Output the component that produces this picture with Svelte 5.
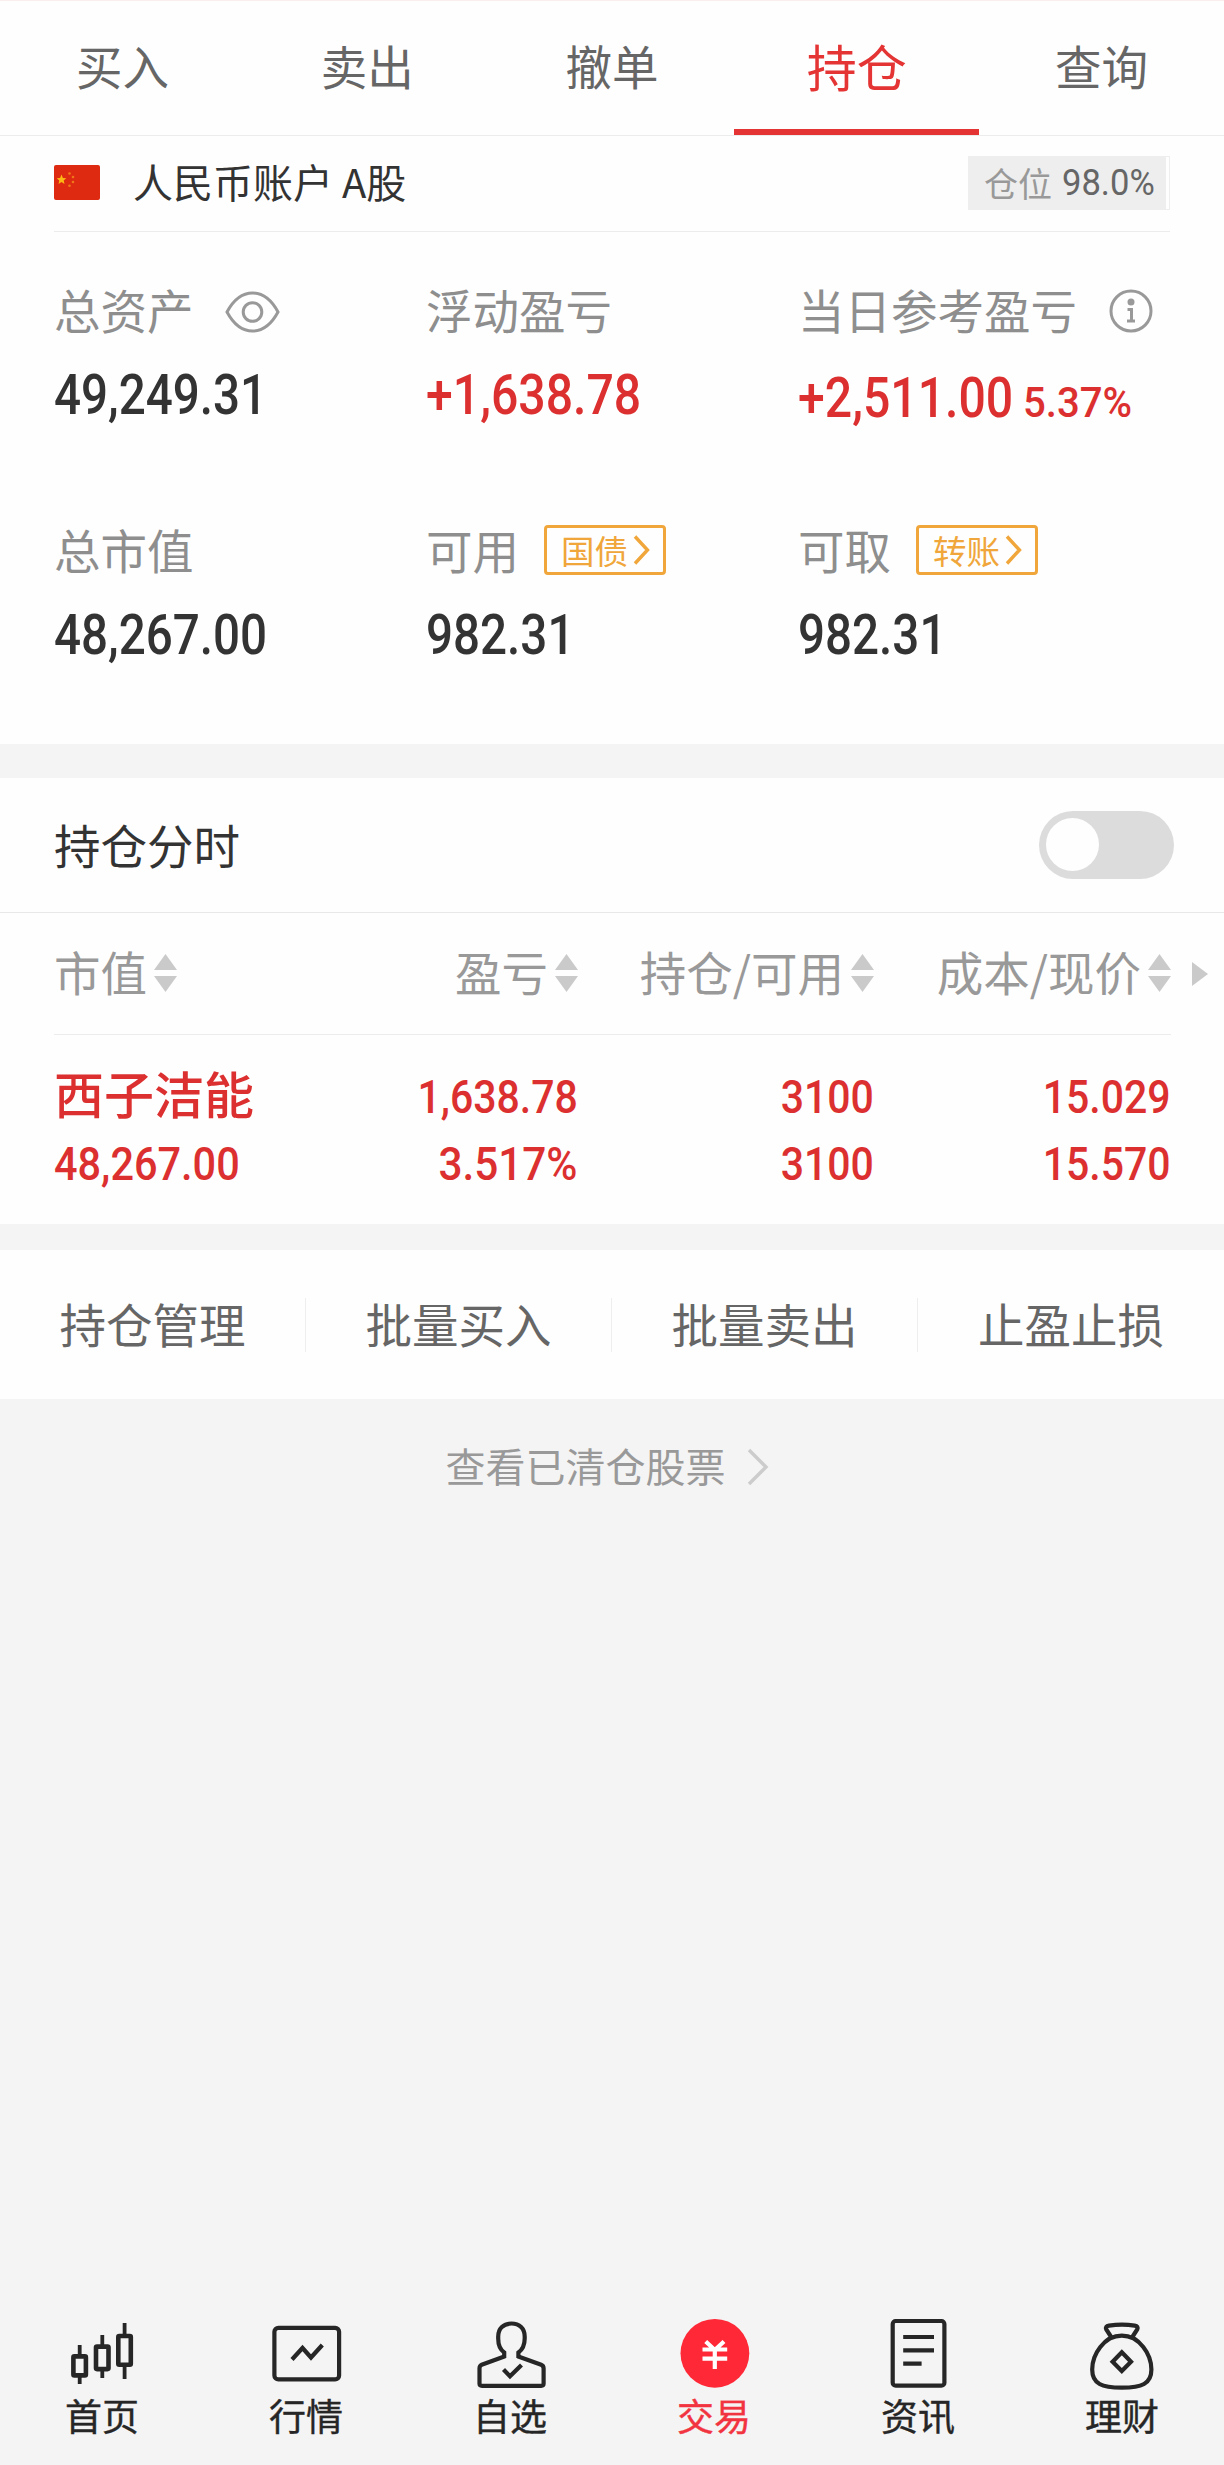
<script>
  const tabs = ['买入', '卖出', '撤单', '持仓', '查询'];
  const activeTab = '持仓';
  const columns = ['市值', '盈亏', '持仓/可用', '成本/现价'];
  const actions = ['持仓管理', '批量买入', '批量卖出', '止盈止损'];
  const nav = [
    { id: 'home', label: '首页' },
    { id: 'market', label: '行情' },
    { id: 'watch', label: '自选' },
    { id: 'trade', label: '交易' },
    { id: 'news', label: '资讯' },
    { id: 'wealth', label: '理财' }
  ];
</script>

{#snippet sorter()}
  <svg class="sorter" width="23" height="38" viewBox="0 0 23 38">
    <path d="M11.5 0 23 16H0zM0 22h23L11.5 38z" fill="#cacaca" />
  </svg>
{/snippet}

{#snippet tag(label)}
  <span class="tag">
    {label}
    <svg width="17" height="30" viewBox="0 0 17 30">
      <path d="M2 1.5 14.5 15 2 28.5" fill="none" stroke="#f0a63a" stroke-width="3.4" />
    </svg>
  </span>
{/snippet}

{#snippet navIcon(id)}
  <svg class="nav-icon" width="204" height="76" viewBox="0 -4 204 76" fill="none" stroke="#262626" stroke-width="4.2">
    {#if id === 'home'}
      <path d="M79.7 25v11M79.7 56v8M102.3 15v11M102.3 50v8M124.6 3v12M124.6 46v13" stroke-width="3.8" />
      <rect x="73.4" y="36.4" width="12.5" height="19" rx="1" stroke-width="4.6" />
      <rect x="96" y="26.6" width="12.5" height="22.5" rx="1" stroke-width="4.6" />
      <rect x="118.3" y="16" width="12.5" height="28.7" rx="1" stroke-width="4.6" />
    {:else if id === 'market'}
      <rect x="70.4" y="7.8" width="64.7" height="51.6" rx="4" />
      <path d="M88 39.5 98.5 28l8.5 9.5L118.3 25" />
    {:else if id === 'watch'}
      <path d="M96.2 38v-5.5C92 29.5 90.2 24.5 90.2 18.5V16.5C90.2 8.5 95.5 3.5 103.5 3.5S116.7 8.5 116.7 16.5V18.5C116.7 24.5 114.6 29.5 110.4 32.5v5.5" />
      <path d="M97 36.3 73.7 44.8Q71.5 45.7 71.5 48.5V63.5Q71.5 65.8 74 65.8H133.2Q135.6 65.8 135.6 63.5V48.5Q135.6 45.7 133.2 44.8L109.6 36.3" />
      <path d="M95.5 49.5 102 56.3 113.5 45" />
    {:else if id === 'trade'}
      <circle cx="102.9" cy="33.3" r="34.4" fill="#ff2837" stroke="none" />
      <path d="M93.7 21.5 102.8 30 112 21.5M90.5 29.5h24.7M90.5 38.7h24.7M102.8 29V49" stroke="#fff" />
    {:else if id === 'news'}
      <rect x="76.7" y="1" width="51.7" height="64.7" rx="3" />
      <path d="M87.2 17H118M87.2 30.4H118M87.2 43.7H105.6" />
    {:else}
      <path d="M91.5 17.5 86.3 9.5Q84.8 6.3 89 5.6Q102 3.8 114.7 5.6Q118.7 6.3 117.2 9.5L112 17.5" />
      <path d="M101.8 15.7C84 15.7 72.2 34.5 72.2 49.5C72.2 64 82 67.6 101.8 67.6S131.4 64 131.4 49.5C131.4 34.5 119.6 15.7 101.8 15.7Z" />
      <path d="M101.8 32.3 111 41.7 101.8 51 92.6 41.7Z" />
    {/if}
  </svg>
{/snippet}

<div class="screen">
  <nav class="tabs">
    {#each tabs as t}
      <div class="tab" class:active={t === activeTab}><span>{t}</span></div>
    {/each}
  </nav>

  <section class="account">
    <header class="account-head">
      <svg class="flag" width="46" height="35" viewBox="0 0 46 35">
        <rect width="46" height="35" rx="2" fill="#de2a10" />
        <path d="M7.5 9.5 8.9 12.9 12.3 13.2 9.7 15.5 10.5 19 7.5 17.1 4.5 19 5.3 15.5 2.7 13.2 6.1 12.9Z" fill="#fcb814" />
        <g fill="#f0761a">
          <circle cx="15.5" cy="8.5" r="1.3" /><circle cx="19" cy="12" r="1.3" />
          <circle cx="19" cy="17" r="1.3" /><circle cx="15.5" cy="20.8" r="1.3" />
        </g>
      </svg>
      <span class="account-name">人民币账户 A股</span>
      <span class="ratio"><span class="ratio-in">仓位 <b class="num r">98.0%</b></span></span>
    </header>

    <div class="stats">
      <div class="stat">
        <div class="label">
          <span>总资产</span>
          <svg class="eye" width="55" height="42" viewBox="0 0 55 42" fill="none" stroke="#999" stroke-width="3">
            <path d="M2 21C9 8 17 2 27.5 2S46 8 53 21C46 34 38 40 27.5 40S9 34 2 21Z" />
            <circle cx="27.5" cy="21" r="9.3" />
          </svg>
        </div>
        <div class="value"><span class="num">49,249.31</span></div>
      </div>
      <div class="stat">
        <div class="label"><span>浮动盈亏</span></div>
        <div class="value red"><span class="num signed">+1,638.78</span></div>
      </div>
      <div class="stat">
        <div class="label">
          <span>当日参考盈亏</span>
          <svg class="info" width="44" height="44" viewBox="0 0 44 44" fill="none" stroke="#999" stroke-width="3">
            <circle cx="22" cy="22" r="20" />
            <circle cx="22" cy="13" r="3.5" fill="#999" stroke="none" />
            <path d="M18.5 20.5H22.5V32M18 32h8" />
          </svg>
        </div>
        <div class="value red mixed"><span class="num signed gain">+2,511.00</span><span class="num pct">5.37%</span></div>
      </div>
      <div class="stat">
        <div class="label"><span>总市值</span></div>
        <div class="value"><span class="num">48,267.00</span></div>
      </div>
      <div class="stat">
        <div class="label"><span>可用</span>{@render tag('国债')}</div>
        <div class="value"><span class="num">982.31</span></div>
      </div>
      <div class="stat">
        <div class="label"><span>可取</span>{@render tag('转账')}</div>
        <div class="value"><span class="num">982.31</span></div>
      </div>
    </div>
  </section>

  <section class="holdings">
    <header class="hold-head">
      <span class="hold-title">持仓分时</span>
      <span class="toggle"><i></i></span>
    </header>
    <div class="row thead">
      {#each columns as c}
        <div class="cell"><span>{c}</span>{@render sorter()}</div>
      {/each}
      <svg class="more" width="16" height="24" viewBox="0 0 16 24"><path d="M0 0 16 12 0 24Z" fill="#cacaca" /></svg>
    </div>
    <div class="row body first">
      <div class="cell name">西子洁能</div>
      <div class="cell"><span class="num">1,638.78</span></div>
      <div class="cell"><span class="num">3100</span></div>
      <div class="cell"><span class="num">15.029</span></div>
    </div>
    <div class="row body second">
      <div class="cell"><span class="num">48,267.00</span></div>
      <div class="cell"><span class="num rate">3.517%</span></div>
      <div class="cell"><span class="num">3100</span></div>
      <div class="cell"><span class="num">15.570</span></div>
    </div>
  </section>

  <section class="actions">
    {#each actions as a}
      <div class="action">{a}</div>
    {/each}
  </section>

  <div class="cleared">
    <span>查看已清仓股票</span>
    <svg width="22" height="38" viewBox="0 0 22 38"><path d="M2 2 19 19 2 36" fill="none" stroke="#ccc" stroke-width="3.4" /></svg>
  </div>

  <footer class="bottom">
    {#each nav as n}
      <div class="nav-item" class:on={n.id === 'trade'}>
        {@render navIcon(n.id)}
        <span>{n.label}</span>
      </div>
    {/each}
  </footer>
</div>

<style>
  :global(body) { background: #f4f4f4; }
  .screen {
    width: 1224px;
    height: 2465px;
    display: flex;
    flex-direction: column;
    overflow: hidden;
    background: #f4f4f4;
    color: #333;
    font-family: 'Noto Sans CJK SC', sans-serif;
    font-size: 46.5px;
    box-sizing: border-box;
  }
  .screen * { box-sizing: border-box; }
  svg { display: block; flex: none; }
  .num {
    display: inline-block;
    font-family: Roboto, sans-serif;
    font-weight: 500;
    white-space: nowrap;
    transform: scaleX(0.865);
    transform-origin: left center;
  }
  .num.signed { transform: scaleX(0.876); }
  .red { color: #dc3030; }

  .tabs {
    display: grid;
    grid-template-columns: repeat(5, 1fr);
    height: 136px;
    background: #fefefe;
    border-top: 1px solid #fbeeee;
    border-bottom: 1px solid #ececec;
  }
  .tab {
    display: flex;
    align-items: center;
    justify-content: center;
    line-height: 60px;
    color: #666;
    border-bottom: 6px solid transparent;
  }
  .tab.active { color: #e43434; font-size: 50px; border-color: #e43434; }

  .account { height: 608px; background: #fefefe; }
  .account-head {
    display: flex;
    align-items: center;
    height: 96px;
    margin: 0 54px;
    border-bottom: 1px solid #ececec;
    font-size: 40px;
    line-height: 56px;
  }
  .flag { margin: 0 33px 3px 0; }
  .account-name { margin-bottom: 5px; flex: 1; }
  .ratio {
    height: 54px;
    margin-bottom: 2px;
    padding-right: 3px;
    border: 1px solid #eee;
    border-left: 0;
  }
  .ratio-in {
    display: flex;
    align-items: center;
    width: 198px;
    height: 52px;
    padding-left: 16px;
    gap: 10px;
    background: #eee;
    color: #999;
    font-size: 34px;
    line-height: 48px;
  }
  .num.r { color: #666; font-size: 36px; font-weight: 400; transform: scaleX(0.96); }

  .stats {
    display: grid;
    grid-template-columns: repeat(3, 372px);
    grid-template-rows: 240px 240px;
    padding: 48px 0 0 54px;
  }
  .label {
    display: flex;
    align-items: center;
    height: 60px;
    color: #8e8e8e;
    line-height: 60px;
  }
  .label > span:first-child { margin-bottom: 3px; }
  .eye { margin-left: 31px; margin-top: 3px; }
  .info { margin-left: 32px; margin-top: 1px; }
  .value { display: flex; height: 70px; margin-top: 20px; line-height: 70px; font-size: 55px; }
  .mixed { align-items: baseline; padding-top: 3px; }
  .gain { width: 225px; }
  .num.pct { font-size: 42px; transform: scaleX(0.955); }
  .tag {
    display: flex;
    align-items: center;
    width: 122px;
    height: 50px;
    margin-left: 25px;
    padding-left: 14px;
    gap: 5px;
    border: 3px solid #f0a63a;
    border-radius: 4px;
    color: #f0a63a;
    font-size: 33.5px;
    line-height: 44px;
  }

  .holdings { height: 446px; margin-top: 34px; background: #fefefe; }
  .hold-head {
    display: flex;
    align-items: center;
    justify-content: space-between;
    height: 135px;
    padding: 0 50px 0 54px;
    border-bottom: 1px solid #e8e8e8;
    line-height: 60px;
  }
  .hold-title { margin-bottom: 3px; }
  .toggle { width: 135px; height: 68px; padding: 7px; border-radius: 34px; background: #dcdcdc; }
  .toggle i { display: block; width: 53px; height: 53px; border-radius: 50%; background: #fefefe; }
  .row {
    position: relative;
    display: grid;
    grid-template-columns: 226px 298px 296px 297px;
    align-items: center;
    margin: 0 53px 0 54px;
  }
  .cell { display: flex; justify-content: flex-end; align-items: center; white-space: nowrap; }
  .cell:first-child { justify-content: flex-start; }
  .thead { height: 122px; color: #999; line-height: 60px; border-bottom: 1px solid #ececec; }
  .thead .cell > span { margin-bottom: 5px; }
  .sorter { margin: 0 0 2px 7px; }
  .more { position: absolute; left: 1138px; top: 49px; }
  .body { color: #dc3030; font-size: 47px; }
  .body .num { line-height: 66px; transform: scaleX(0.872); transform-origin: right center; }
  .body .cell:first-child .num { transform: scaleX(0.882); transform-origin: left center; }
  .body .num.rate { transform: scaleX(0.9); }
  .first { height: 66px; margin-top: 24px; }
  .second { height: 67px; margin-top: 5px; }
  .name { font-size: 50px; font-weight: 500; line-height: 66px; padding-bottom: 9px; }

  .actions {
    display: grid;
    grid-template-columns: repeat(4, 1fr);
    align-items: center;
    height: 149px;
    margin-top: 26px;
    background: #fefefe;
    color: #666;
  }
  .action { height: 54px; line-height: 49px; text-align: center; border-right: 1px solid #eee; }
  .action:last-child { border-right: 0; }

  .cleared {
    display: flex;
    align-items: center;
    justify-content: center;
    gap: 21px;
    height: 136px;
    color: #999;
    font-size: 40px;
    line-height: 60px;
    padding-right: 10px;
  }
  .cleared span { margin-bottom: 4px; }
  .bottom {
    display: grid;
    grid-template-columns: repeat(6, 204px);
    margin-top: auto;
    height: 149px;
    color: #262626;
    font-size: 37px;
  }
  .nav-item { display: flex; flex-direction: column; align-items: center; line-height: 46px; }
  .nav-item span { -webkit-text-stroke: 0.4px currentColor; }
  .nav-item.on { color: #f23340; }
</style>
